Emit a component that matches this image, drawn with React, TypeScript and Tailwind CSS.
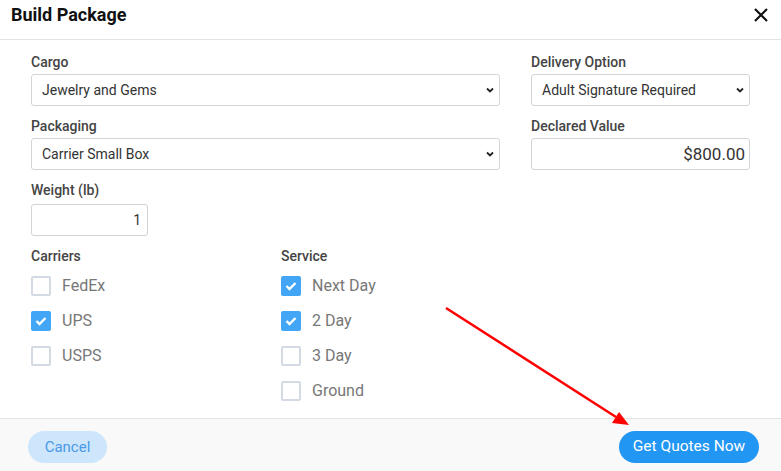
import { useState } from "react";

const Chevron = () => (
  <svg
    width="10"
    height="10"
    viewBox="0 0 10 10"
    className="pointer-events-none absolute right-[5px] top-1/2 -translate-y-1/2"
  >
    <path d="M2 3.5 L5 6.5 L8 3.5" fill="none" stroke="#222" strokeWidth="1.8" />
  </svg>
);

const SelectBox = ({ value }: { value: string }) => (
  <div className="relative">
    <select
      defaultValue={value}
      className="w-full h-[32px] appearance-none border border-[#d4d4d4] rounded-[3px] bg-white pl-[10px] pr-[24px] text-[14px] text-[#333] outline-none"
    >
      <option>{value}</option>
    </select>
    <Chevron />
  </div>
);

const Label = ({ children }: { children: string }) => (
  <div className="text-[14px] leading-[21px] font-medium text-[#444] mb-[1px]">{children}</div>
);

const Check = ({ label, checked }: { label: string; checked: boolean }) => {
  const [on, setOn] = useState(checked);
  return (
    <label className="flex items-center h-[35px] gap-[11px] cursor-pointer" onClick={() => setOn(!on)}>
      {on ? (
        <span className="w-[20px] h-[20px] rounded-[2px] bg-[#42a5f5] flex items-center justify-center">
          <svg width="12" height="10" viewBox="0 0 12 10">
            <path d="M1.5 5 L4.5 8 L10.5 2" fill="none" stroke="#fff" strokeWidth="2.4" />
          </svg>
        </span>
      ) : (
        <span className="w-[20px] h-[20px] rounded-[2px] border-2 border-[#d3dae3] bg-white" />
      )}
      <span className="text-[16px] text-[#777]">{label}</span>
    </label>
  );
};

export default function App() {
  return (
    <div className="relative w-[781px] h-[471px] bg-white font-['Roboto',sans-serif] flex flex-col overflow-hidden">
      <div className="h-[40px] flex items-start justify-between border-b border-[#e3e3e3] pl-[11px] pr-[12px]">
        <div className="text-[18px] leading-[30px] font-bold text-[#111]">Build Package</div>
        <button className="mt-[7px] text-[#111]">
          <svg width="16" height="16" viewBox="0 0 16 16">
            <path d="M2 2 L14 14 M14 2 L2 14" stroke="#111" strokeWidth="2.2" />
          </svg>
        </button>
      </div>

      <div className="flex-1 px-[31px] pt-[12px]">
        <div className="grid grid-cols-[469px_219px] gap-x-[31px]">
          <div>
            <Label>Cargo</Label>
            <SelectBox value="Jewelry and Gems" />
          </div>
          <div>
            <Label>Delivery Option</Label>
            <SelectBox value="Adult Signature Required" />
          </div>
          <div className="mt-[10px]">
            <Label>Packaging</Label>
            <SelectBox value="Carrier Small Box" />
          </div>
          <div className="mt-[10px]">
            <Label>Declared Value</Label>
            <input
              defaultValue="$800.00"
              className="w-full h-[32px] border border-[#d4d4d4] rounded-[3px] pl-[9px] pr-[4px] text-right text-[17px] text-[#333] outline-none"
            />
          </div>
        </div>

        <div className="mt-[10px]">
          <div className="text-[14px] leading-[21px] font-medium text-[#444] mb-[3px]">Weight (lb)</div>
          <input
            defaultValue="1"
            className="w-[117px] h-[32px] border border-[#d4d4d4] rounded-[3px] pl-[9px] pr-[6px] text-right text-[14px] text-[#333] outline-none"
          />
        </div>

        <div className="mt-[10px] flex">
          <div className="w-[250px]">
            <div className="text-[14px] leading-[21px] font-medium text-[#444] mb-[1px]">Carriers</div>
            <Check label="FedEx" checked={false} />
            <Check label="UPS" checked={true} />
            <Check label="USPS" checked={false} />
          </div>
          <div>
            <div className="text-[14px] leading-[21px] font-medium text-[#444] mb-[1px]">Service</div>
            <Check label="Next Day" checked={true} />
            <Check label="2 Day" checked={true} />
            <Check label="3 Day" checked={false} />
            <Check label="Ground" checked={false} />
          </div>
        </div>
      </div>

      <div className="h-[53px] border-t border-[#e3e3e3] bg-[#f9f9f9] flex items-start justify-between pt-[12px] pl-[28px] pr-[22px]">
        <button className="h-[32px] w-[79px] rounded-full bg-[#cde6fc] text-[15px] text-[#4a9ae8]">Cancel</button>
        <button className="h-[32px] w-[140px] rounded-full bg-[#2196f3] text-[15.5px] text-white">Get Quotes Now</button>
      </div>

      <svg className="pointer-events-none absolute left-0 top-0" width="781" height="471" viewBox="0 0 781 471">
        <line x1="446" y1="308" x2="616" y2="417" stroke="#f00" strokeWidth="2.6" />
        <path d="M629 425 L612 423 L619 412 Z" fill="#f00" />
      </svg>
    </div>
  );
}
